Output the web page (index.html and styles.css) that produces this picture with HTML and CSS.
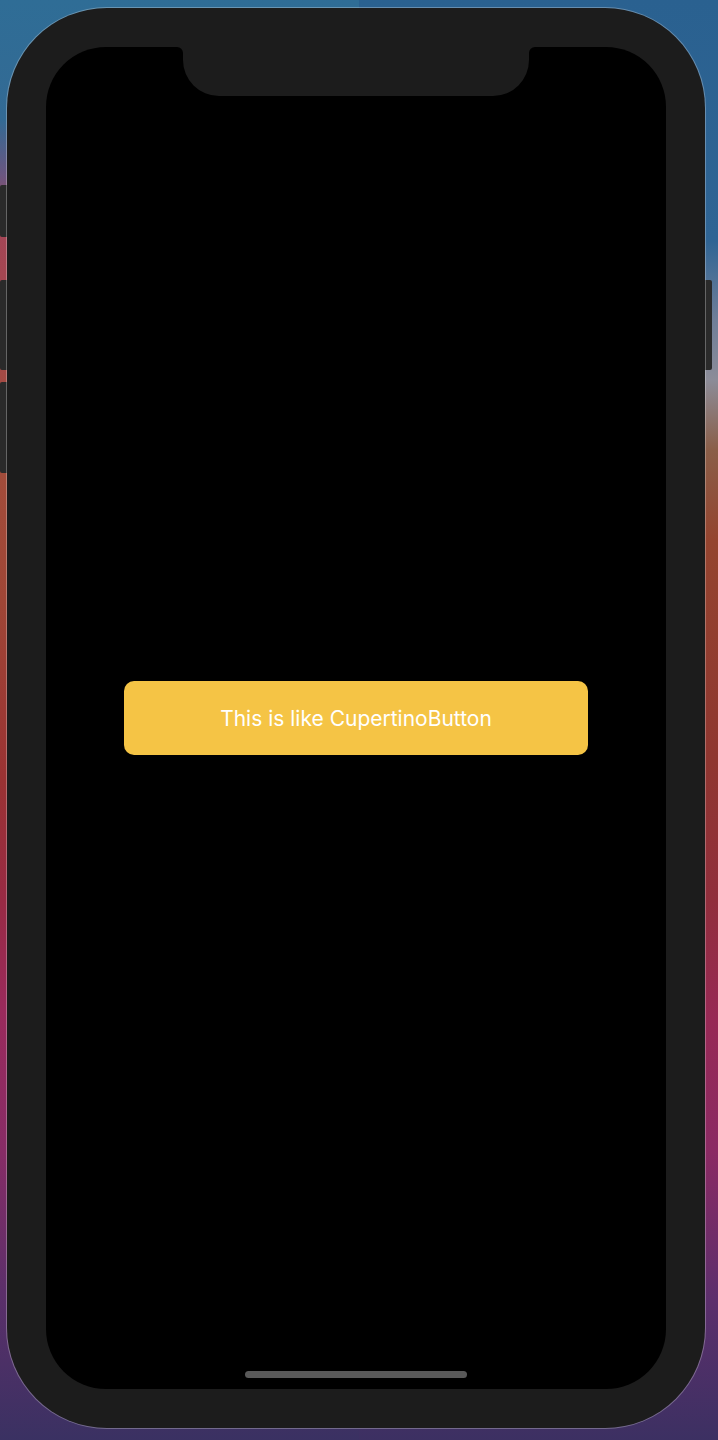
FILE: index.html
```html
<!DOCTYPE html>
<html lang="en">
<head>
<meta charset="utf-8">
<title>CupertinoButton</title>
<link rel="stylesheet" href="styles.css">
</head>
<body>
  <div class="device">
    <span class="side-btn side-btn-mute"></span>
    <span class="side-btn side-btn-vol-up"></span>
    <span class="side-btn side-btn-vol-down"></span>
    <span class="side-btn side-btn-power"></span>
    <div class="screen">
      <svg class="notch" width="358" height="49" viewBox="0 0 358 49" aria-hidden="true">
        <path d="M0,0 A6,6 0 0 1 6,6 V13 A36,36 0 0 0 42,49 H316 A36,36 0 0 0 352,13 V6 A6,6 0 0 1 358,0 Z" fill="#1c1c1c"/>
      </svg>
      <button class="cupertino-btn" type="button">This is like CupertinoButton</button>
      <span class="home-indicator"></span>
    </div>
  </div>
</body>
</html>
```

FILE: styles.css
```css
html, body {
  margin: 0;
  padding: 0;
}

body {
  width: 718px;
  height: 1440px;
  box-sizing: border-box;
  padding: 8px 0 0 7px;
  overflow: hidden;
  background:
    linear-gradient(to bottom,
      #2f6d96 0px, #336a94 120px, #6a5680 175px, #a34557 220px,
      #a5474c 330px, #a34e3c 430px, #9f4636 600px, #9a3233 780px,
      #982a44 900px, #9a2a5c 1010px, #872c66 1150px, #5c2f6a 1290px,
      #3a3162 1440px) left top / 50% 100% no-repeat,
    linear-gradient(to bottom,
      #2a6190 0px, #2f6494 240px, #6f7e98 320px, #8c8c98 380px,
      #8a5e48 450px, #94442f 540px, #8f3630 760px, #912e3c 900px,
      #972955 1020px, #8b2a63 1150px, #5c2f6c 1300px, #3c3062 1440px) right top / 50% 100% no-repeat;
  font-family: Inter, "Noto Sans", "Liberation Sans", sans-serif;
}

.device {
  position: relative;
  width: 698px;
  height: 1420px;
  box-sizing: border-box;
  padding: 39px;
  border-radius: 100px;
  background: #1c1c1c;
  box-shadow: 0 0 0 1px rgba(255, 255, 255, 0.28);
}

.side-btn {
  position: absolute;
  width: 8px;
  background: #2a2a2a;
  z-index: -1;
}

.side-btn-mute {
  left: -7px;
  top: 177px;
  height: 52px;
  border-radius: 2px 0 0 2px;
}

.side-btn-vol-up {
  left: -7px;
  top: 272px;
  height: 90px;
  border-radius: 2px 0 0 2px;
}

.side-btn-vol-down {
  left: -7px;
  top: 374px;
  height: 91px;
  border-radius: 2px 0 0 2px;
}

.side-btn-power {
  right: -7px;
  top: 272px;
  height: 90px;
  border-radius: 0 2px 2px 0;
}

.screen {
  position: relative;
  height: 100%;
  background: #000;
  border-radius: 60px;
  display: flex;
  align-items: center;
  justify-content: center;
  overflow: hidden;
}

.notch {
  position: absolute;
  top: 0;
  left: 131px;
  display: block;
}

.cupertino-btn {
  width: 464px;
  height: 74px;
  border: none;
  border-radius: 10px;
  background: #f5c445;
  color: #fff;
  font-family: Inter, "Noto Sans", "Liberation Sans", sans-serif;
  font-size: 21px;
  font-weight: 400;
  letter-spacing: 0;
  padding: 0;
  cursor: pointer;
}

.home-indicator {
  position: absolute;
  left: 199px;
  bottom: 11px;
  width: 222px;
  height: 7px;
  border-radius: 4px;
  background: #595959;
}
```
